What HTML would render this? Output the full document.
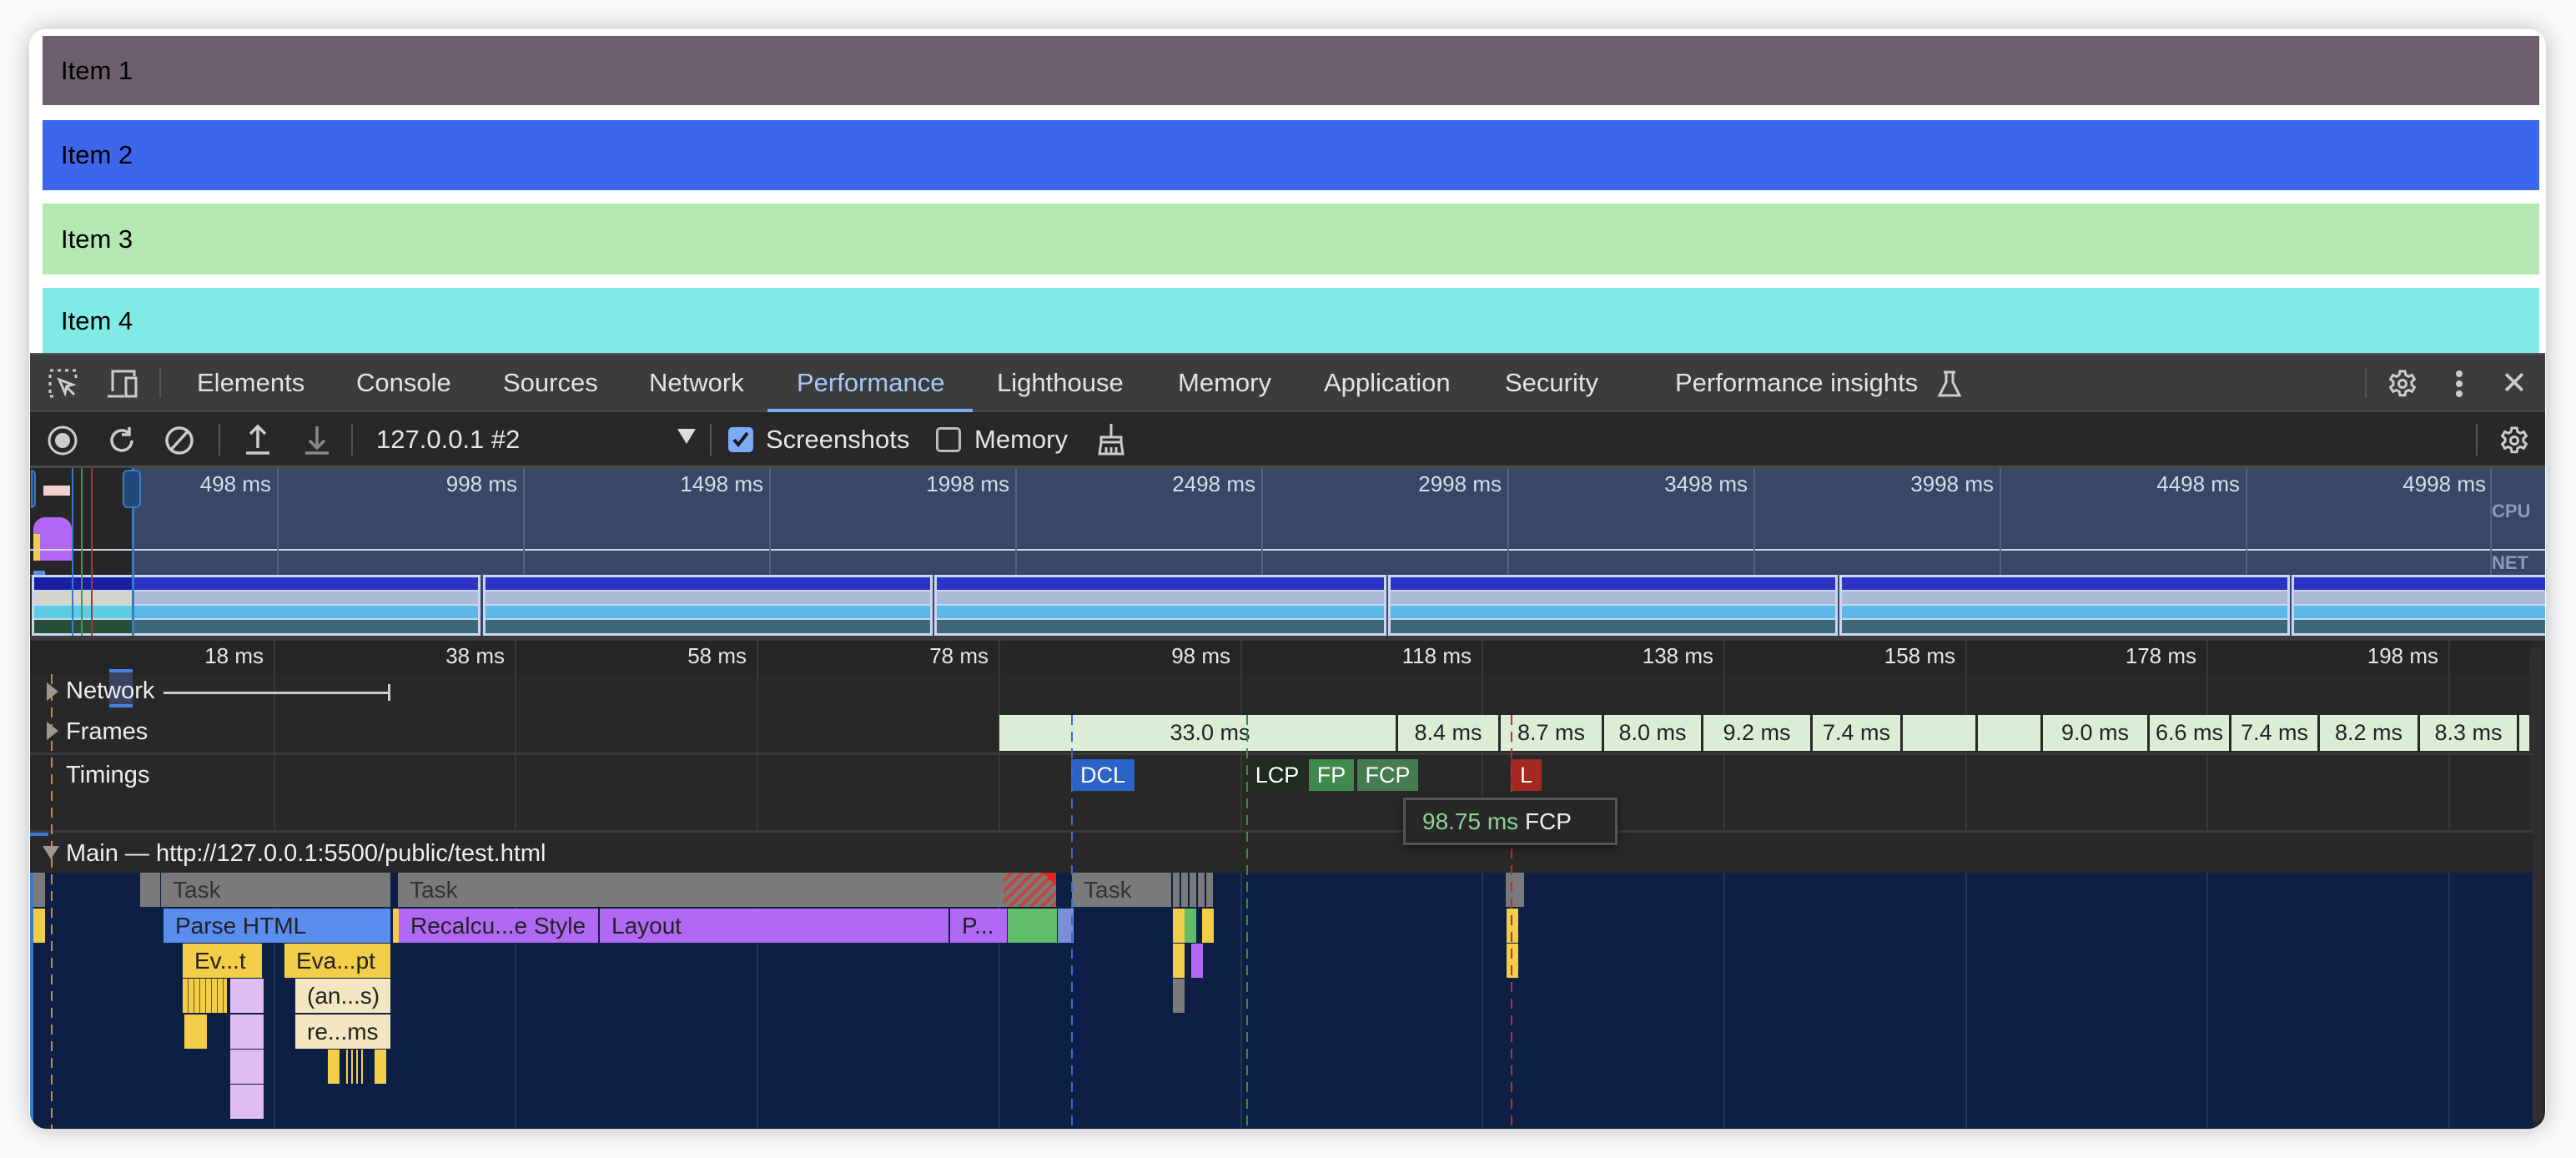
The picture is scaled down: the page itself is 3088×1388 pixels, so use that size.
<!DOCTYPE html>
<html><head><meta charset="utf-8"><style>
*{box-sizing:border-box;margin:0;padding:0}
body{width:3088px;height:1388px;background:#fafafa;position:relative;overflow:hidden;font-family:"Liberation Sans",Arial,sans-serif}
.a{position:absolute}
.win{left:35px;top:35px;width:3017px;height:1318px;background:#fff;border-radius:20px;box-shadow:0 0 30px rgba(0,0,0,.25);overflow:hidden}
.item{position:absolute;left:16px;width:2993px;font-size:31px;color:#000;padding-left:22px;display:flex;align-items:center}
.tab{position:absolute;top:0;height:71px;line-height:71px;font-size:31px;color:#e3e3e3}
.sep{position:absolute;width:2px;background:#555}
.tk{position:absolute;font-size:26px;color:#e6e6e6;text-align:right;width:200px}
.gl{position:absolute;width:2px}
.fr{position:absolute;top:857px;height:43px;background:#dcedd5;border-right:3px solid #282828;font-size:27px;color:#222;text-align:center;line-height:43px;overflow:hidden;white-space:nowrap}
.bar{position:absolute;height:41px;font-size:28px;line-height:41px;color:#222;padding-left:14px;overflow:hidden;white-space:nowrap}
.tm{position:absolute;top:910px;height:38px;font-size:27px;line-height:38px;color:#fff;text-align:center}
.shot{position:absolute;top:689px;height:73px;border:3px solid #c9d6f2;background:#c9d6f2}
.shot div{height:15px;margin-bottom:2px}
.lbl{position:absolute;font-size:29px;color:#eee}
</style></head><body>
<div class="a win">
 <div class="item" style="top:8px;height:83px;background:#6d5f6e">Item 1</div>
 <div class="item" style="top:109px;height:84px;background:#3e66ec">Item 2</div>
 <div class="item" style="top:209px;height:85px;background:#b3e9b0">Item 3</div>
 <div class="item" style="top:310px;height:80px;background:#80eae4">Item 4</div>
</div>

<div class="a" style="left:36px;top:423px;width:3015px;height:930px;background:#282828;border-bottom-left-radius:20px;border-bottom-right-radius:20px;overflow:hidden">
<div style="position:absolute;left:-36px;top:-423px;width:3088px;height:1388px">

<div class="a" style="left:36px;top:423px;width:3015px;height:71px;background:#3c3c3c;border-top:2px solid #555;border-bottom:2px solid #4a4a4a"></div>
<div class="a" style="left:0;top:423px;width:3088px;height:71px">
 <svg class="a" style="left:57px;top:18px" width="38" height="38" viewBox="0 0 38 38" fill="none" stroke="#ccc" stroke-width="3"><path d="M3 3h4M12 3h4M21 3h4M30 3h4M3 8v4M3 17v4M3 26v4M3 34h4M34 8v4"/><path d="M14 14l16 6-7 2-2 8z"/><path d="M22 22l10 10"/></svg>
 <svg class="a" style="left:127px;top:18px" width="40" height="38" viewBox="0 0 40 38" fill="none" stroke="#ccc" stroke-width="3"><path d="M8 28V4h26v6"/><rect x="24" y="12" width="12" height="22"/><path d="M2 34h20"/></svg>
 <div class="sep" style="left:191px;top:18px;height:36px"></div>
 <div class="tab" style="left:236px">Elements</div>
 <div class="tab" style="left:427px">Console</div>
 <div class="tab" style="left:603px">Sources</div>
 <div class="tab" style="left:778px">Network</div>
 <div class="tab" style="left:955px;color:#a8c7fa">Performance</div>
 <div class="a" style="left:920px;top:67px;width:246px;height:4px;background:#7cacf8"></div>
 <div class="tab" style="left:1195px">Lighthouse</div>
 <div class="tab" style="left:1412px">Memory</div>
 <div class="tab" style="left:1587px">Application</div>
 <div class="tab" style="left:1804px">Security</div>
 <div class="tab" style="left:2008px">Performance insights</div>
 <svg class="a" style="left:2322px;top:20px" width="30" height="34" viewBox="0 0 30 34" fill="none" stroke="#ccc" stroke-width="3"><path d="M8 3h14M11 3v12L3 31h24L19 15V3"/></svg>
 <div class="sep" style="left:2835px;top:18px;height:36px"></div>
 <svg class="a" style="left:2862px;top:19px" width="36" height="36" viewBox="0 0 24 24" fill="none" stroke="#ccc" stroke-width="2"><circle cx="12" cy="12" r="3"/><path d="M10 2h4l.6 3 2.2 1.2 2.8-1.2 2 3.4-2.3 2v2.4l2.3 2-2 3.4-2.8-1.2-2.2 1.2-.6 3h-4l-.6-3-2.2-1.2-2.8 1.2-2-3.4 2.3-2v-2.4l-2.3-2 2-3.4 2.8 1.2L9.4 5z"/></svg>
 <div class="a" style="left:2944px;top:21px;width:8px;height:8px;border-radius:4px;background:#ccc;box-shadow:0 12px 0 #ccc,0 24px 0 #ccc"></div>
 <div class="a" style="left:2998px;top:14px;font-size:38px;color:#ccc">✕</div>
</div>

<div class="a" style="left:36px;top:494px;width:3015px;height:67px;background:#282828;border-bottom:3px solid #4a4a4a"></div>
<div class="a" style="left:0;top:494px;width:3088px;height:67px">
 <svg class="a" style="left:56px;top:15px" width="38" height="38" viewBox="0 0 38 38"><circle cx="19" cy="19" r="16" fill="none" stroke="#ccc" stroke-width="3"/><circle cx="19" cy="19" r="9" fill="#ccc"/></svg>
 <svg class="a" style="left:127px;top:15px" width="38" height="38" viewBox="0 0 38 38" fill="none" stroke="#ccc" stroke-width="3.5"><path d="M31 19a12 12 0 1 1-4-9"/><path d="M28 3v9h-9"/></svg>
 <svg class="a" style="left:196px;top:15px" width="38" height="38" viewBox="0 0 38 38" fill="none" stroke="#ccc" stroke-width="3.5"><circle cx="19" cy="19" r="15"/><path d="M29 8L9 30"/></svg>
 <div class="sep" style="left:262px;top:14px;height:38px"></div>
 <svg class="a" style="left:292px;top:13px" width="34" height="40" viewBox="0 0 34 40" fill="none" stroke="#ccc" stroke-width="3.5"><path d="M17 30V4M8 13l9-9 9 9M3 36h28"/></svg>
 <svg class="a" style="left:363px;top:13px" width="34" height="40" viewBox="0 0 34 40" fill="none" stroke="#888" stroke-width="3.5"><path d="M17 4v26M8 21l9 9 9-9M3 36h28"/></svg>
 <div class="sep" style="left:421px;top:14px;height:38px"></div>
 <div class="a" style="left:451px;top:15px;font-size:31px;color:#e6e6e6">127.0.0.1 #2</div>
 <div class="a" style="left:812px;top:20px;width:0;height:0;border-left:11px solid transparent;border-right:11px solid transparent;border-top:18px solid #ddd"></div>
 <div class="sep" style="left:851px;top:14px;height:38px"></div>
 <div class="a" style="left:873px;top:18px;width:30px;height:30px;border-radius:5px;background:#7cacf8"></div>
 <svg class="a" style="left:876px;top:21px" width="24" height="24" viewBox="0 0 24 24" fill="none" stroke="#1b1b1b" stroke-width="4"><path d="M4 12l5 6 11-14"/></svg>
 <div class="a" style="left:918px;top:15px;font-size:31px;color:#e6e6e6">Screenshots</div>
 <div class="a" style="left:1122px;top:18px;width:30px;height:30px;border-radius:5px;border:3px solid #bbb"></div>
 <div class="a" style="left:1168px;top:15px;font-size:31px;color:#e6e6e6">Memory</div>
 <svg class="a" style="left:1314px;top:12px" width="36" height="40" viewBox="0 0 36 40" fill="none" stroke="#ccc" stroke-width="3"><path d="M18 2v16M6 18h24v6H6zM6 24l-2 14h28l-2-14M12 30v8M18 30v8M24 30v8"/></svg>
 <div class="sep" style="left:2968px;top:14px;height:38px"></div>
 <svg class="a" style="left:2996px;top:16px" width="36" height="36" viewBox="0 0 24 24" fill="none" stroke="#ccc" stroke-width="2"><circle cx="12" cy="12" r="3"/><path d="M10 2h4l.6 3 2.2 1.2 2.8-1.2 2 3.4-2.3 2v2.4l2.3 2-2 3.4-2.8-1.2-2.2 1.2-.6 3h-4l-.6-3-2.2-1.2-2.8 1.2-2-3.4 2.3-2v-2.4l-2.3-2 2-3.4 2.8 1.2L9.4 5z"/></svg>
</div>

<div class="a" style="left:36px;top:561px;width:3015px;height:201px;background:#374866"></div>
<div class="a" style="left:36px;top:561px;width:122px;height:201px;background:#262626"></div>
<div class="a" style="left:40px;top:620px;width:46px;height:52px;background:#b168f5;border-radius:14px 14px 0 0"></div>
<div class="a" style="left:40px;top:640px;width:8px;height:32px;background:#f2cd47"></div>
<div class="a" style="left:52px;top:582px;width:32px;height:12px;background:#f2cfd0"></div>
<div class="a" style="left:40px;top:684px;width:14px;height:12px;background:#5b8def"></div>
<div class="a" style="left:36px;top:658px;width:3015px;height:2px;background:#cfd6e6"></div>
<div class="a" style="left:36px;top:689px;width:3015px;height:2px;background:#4a5a7a"></div>
<div class="a" style="left:2987px;top:600px;font-size:22px;font-weight:bold;color:#8c9ab6">CPU</div>
<div class="a" style="left:2987px;top:662px;font-size:22px;font-weight:bold;color:#8c9ab6">NET</div>
<div class="gl" style="left:332px;top:561px;height:201px;background:#52627f"></div>
<div class="gl" style="left:627px;top:561px;height:201px;background:#52627f"></div>
<div class="gl" style="left:922px;top:561px;height:201px;background:#52627f"></div>
<div class="gl" style="left:1217px;top:561px;height:201px;background:#52627f"></div>
<div class="gl" style="left:1512px;top:561px;height:201px;background:#52627f"></div>
<div class="gl" style="left:1807px;top:561px;height:201px;background:#52627f"></div>
<div class="gl" style="left:2102px;top:561px;height:201px;background:#52627f"></div>
<div class="gl" style="left:2397px;top:561px;height:201px;background:#52627f"></div>
<div class="gl" style="left:2692px;top:561px;height:201px;background:#52627f"></div>
<div class="gl" style="left:2985px;top:561px;height:201px;background:#52627f"></div>
<div class="tk" style="left:125px;top:565px;color:#d6dcea">498 ms</div>
<div class="tk" style="left:420px;top:565px;color:#d6dcea">998 ms</div>
<div class="tk" style="left:715px;top:565px;color:#d6dcea">1498 ms</div>
<div class="tk" style="left:1010px;top:565px;color:#d6dcea">1998 ms</div>
<div class="tk" style="left:1305px;top:565px;color:#d6dcea">2498 ms</div>
<div class="tk" style="left:1600px;top:565px;color:#d6dcea">2998 ms</div>
<div class="tk" style="left:1895px;top:565px;color:#d6dcea">3498 ms</div>
<div class="tk" style="left:2190px;top:565px;color:#d6dcea">3998 ms</div>
<div class="tk" style="left:2485px;top:565px;color:#d6dcea">4498 ms</div>
<div class="tk" style="left:2780px;top:565px;color:#d6dcea">4998 ms</div>
<div class="shot" style="left:38px;width:538px"><div style="background:#2b34c4"></div><div style="background:#aab9d6"></div><div style="background:#5cb8e6"></div><div style="background:#3d6878;height:16px"></div></div>
<div class="a" style="left:41px;top:692px;width:117px;height:67px;background:linear-gradient(#1a1fa0 0 15px,transparent 15px 17px,#d4d4c8 17px 32px,transparent 32px 34px,#5ccde0 34px 49px,transparent 49px 51px,#27503a 51px)"></div>
<div class="shot" style="left:579px;width:539px"><div style="background:#2b34c4"></div><div style="background:#aab9d6"></div><div style="background:#5cb8e6"></div><div style="background:#3d6878;height:16px"></div></div>
<div class="shot" style="left:1120px;width:542px"><div style="background:#2b34c4"></div><div style="background:#aab9d6"></div><div style="background:#5cb8e6"></div><div style="background:#3d6878;height:16px"></div></div>
<div class="shot" style="left:1664px;width:539px"><div style="background:#2b34c4"></div><div style="background:#aab9d6"></div><div style="background:#5cb8e6"></div><div style="background:#3d6878;height:16px"></div></div>
<div class="shot" style="left:2205px;width:540px"><div style="background:#2b34c4"></div><div style="background:#aab9d6"></div><div style="background:#5cb8e6"></div><div style="background:#3d6878;height:16px"></div></div>
<div class="shot" style="left:2747px;width:310px"><div style="background:#2b34c4"></div><div style="background:#aab9d6"></div><div style="background:#5cb8e6"></div><div style="background:#3d6878;height:16px"></div></div>
<div class="a" style="left:86px;top:561px;width:2px;height:201px;background:#3a77d0"></div>
<div class="a" style="left:97px;top:561px;width:2px;height:201px;background:#3e9a4e"></div>
<div class="a" style="left:109px;top:561px;width:2px;height:201px;background:#b5332a"></div>
<div class="a" style="left:158px;top:561px;width:3px;height:201px;background:#3a7bc0"></div>
<div class="a" style="left:147px;top:563px;width:22px;height:46px;border-radius:6px;background:#1f4a78;border:2px solid #3a7bc0"></div>
<div class="a" style="left:37px;top:563px;width:6px;height:46px;border-radius:0 6px 6px 0;background:#1f4a78;border:2px solid #3a7bc0"></div>

<div class="a" style="left:36px;top:762px;width:3015px;height:6px;background:#3a3a3a"></div>
<div class="a" style="left:36px;top:768px;width:3000px;height:40px;background:#252525"></div>
<div class="gl" style="left:328px;top:768px;height:278px;background:#383838"></div>
<div class="gl" style="left:617px;top:768px;height:278px;background:#383838"></div>
<div class="gl" style="left:907px;top:768px;height:278px;background:#383838"></div>
<div class="gl" style="left:1197px;top:768px;height:278px;background:#383838"></div>
<div class="gl" style="left:1487px;top:768px;height:278px;background:#383838"></div>
<div class="gl" style="left:1776px;top:768px;height:278px;background:#383838"></div>
<div class="gl" style="left:2066px;top:768px;height:278px;background:#383838"></div>
<div class="gl" style="left:2356px;top:768px;height:278px;background:#383838"></div>
<div class="gl" style="left:2645px;top:768px;height:278px;background:#383838"></div>
<div class="gl" style="left:2935px;top:768px;height:278px;background:#383838"></div>
<div class="tk" style="left:116px;top:771px">18 ms</div>
<div class="tk" style="left:405px;top:771px">38 ms</div>
<div class="tk" style="left:695px;top:771px">58 ms</div>
<div class="tk" style="left:985px;top:771px">78 ms</div>
<div class="tk" style="left:1275px;top:771px">98 ms</div>
<div class="tk" style="left:1564px;top:771px">118 ms</div>
<div class="tk" style="left:1854px;top:771px">138 ms</div>
<div class="tk" style="left:2144px;top:771px">158 ms</div>
<div class="tk" style="left:2433px;top:771px">178 ms</div>
<div class="tk" style="left:2723px;top:771px">198 ms</div>
<div class="a" style="left:3032px;top:775px;width:16px;height:570px;background:#2f2f2f;border-radius:8px"></div>

<div class="a" style="left:56px;top:818px;width:0;height:0;border-top:11px solid transparent;border-bottom:11px solid transparent;border-left:14px solid #999"></div>
<div class="a" style="left:131px;top:802px;width:28px;height:46px;background:#3a4460;border-top:4px solid #4a7fe0;border-bottom:4px solid #4a7fe0"></div>
<div class="lbl" style="left:79px;top:812px">Network</div>
<div class="a" style="left:196px;top:829px;width:270px;height:3px;background:#ccc"></div>
<div class="a" style="left:465px;top:820px;width:3px;height:20px;background:#ccc"></div>
<div class="a" style="left:56px;top:865px;width:0;height:0;border-top:11px solid transparent;border-bottom:11px solid transparent;border-left:14px solid #999"></div>
<div class="lbl" style="left:79px;top:861px">Frames</div>
<div class="a" style="left:36px;top:902px;width:3000px;height:3px;background:#3a3a3a"></div>
<div class="fr" style="left:1198px;width:478px">&nbsp;&nbsp;&nbsp;&nbsp;33.0 ms</div>
<div class="fr" style="left:1676px;width:123px">8.4 ms</div>
<div class="fr" style="left:1799px;width:124px">8.7 ms</div>
<div class="fr" style="left:1923px;width:119px">8.0 ms</div>
<div class="fr" style="left:2042px;width:131px">9.2 ms</div>
<div class="fr" style="left:2173px;width:108px">7.4 ms</div>
<div class="fr" style="left:2281px;width:90px"></div>
<div class="fr" style="left:2371px;width:78px"></div>
<div class="fr" style="left:2449px;width:128px">9.0 ms</div>
<div class="fr" style="left:2577px;width:98px">6.6 ms</div>
<div class="fr" style="left:2675px;width:106px">7.4 ms</div>
<div class="fr" style="left:2781px;width:120px">8.2 ms</div>
<div class="fr" style="left:2901px;width:119px">8.3 ms</div>
<div class="fr" style="left:3020px;width:12px;border-right:none"></div>
<div class="lbl" style="left:79px;top:913px">Timings</div>
<div class="a" style="left:36px;top:995px;width:3000px;height:3px;background:#3a3a3a"></div>
<div class="tm" style="left:1284px;width:76px;background:#2d62c9">DCL</div>
<div class="tm" style="left:1500px;width:62px;background:#1f2d20">LCP</div>
<div class="tm" style="left:1569px;width:54px;background:#3f8a4a">FP</div>
<div class="tm" style="left:1627px;width:73px;background:#467a4f">FCP</div>
<div class="tm" style="left:1811px;width:37px;background:#a3281f">L</div>

<div class="a" style="left:36px;top:998px;width:3000px;height:48px;background:#282828"></div>
<div class="a" style="left:36px;top:998px;width:22px;height:4px;background:#3a77d0"></div>
<div class="a" style="left:51px;top:1014px;width:0;height:0;border-left:10px solid transparent;border-right:10px solid transparent;border-top:16px solid #999"></div>
<div class="lbl" style="left:79px;top:1007px">Main — http://127.0.0.1:5500/public/test.html</div>

<div class="a" style="left:36px;top:1046px;width:3000px;height:310px;background:#0e1f45"></div>
<div class="a" style="left:36px;top:1046px;width:4px;height:310px;background:#3a77d0"></div>
<div class="gl" style="left:328px;top:1046px;height:310px;background:#223459"></div>
<div class="gl" style="left:617px;top:1046px;height:310px;background:#223459"></div>
<div class="gl" style="left:907px;top:1046px;height:310px;background:#223459"></div>
<div class="gl" style="left:1197px;top:1046px;height:310px;background:#223459"></div>
<div class="gl" style="left:1487px;top:1046px;height:310px;background:#223459"></div>
<div class="gl" style="left:1776px;top:1046px;height:310px;background:#223459"></div>
<div class="gl" style="left:2066px;top:1046px;height:310px;background:#223459"></div>
<div class="gl" style="left:2356px;top:1046px;height:310px;background:#223459"></div>
<div class="gl" style="left:2645px;top:1046px;height:310px;background:#223459"></div>
<div class="gl" style="left:2935px;top:1046px;height:310px;background:#223459"></div>
<div class="bar" style="left:40px;top:1046px;width:13px;background:#7a7a7a"></div>
<div class="bar" style="left:168px;top:1046px;width:4px;background:#7a7a7a"></div>
<div class="bar" style="left:174px;top:1046px;width:18px;background:#7a7a7a"></div>
<div class="bar" style="left:193px;top:1046px;width:275px;background:#7a7a7a;color:#333">Task</div>
<div class="bar" style="left:477px;top:1046px;width:726px;background:#7a7a7a;color:#333">Task</div>
<div class="bar" style="left:1203px;top:1046px;width:63px;background:repeating-linear-gradient(135deg,#7a7a7a 0 5px,#c0463c 5px 9px)"></div>
<div class="a" style="left:1250px;top:1046px;width:0;height:0;border-left:16px solid transparent;border-top:16px solid #e8231f"></div>
<div class="bar" style="left:1285px;top:1046px;width:119px;background:#7a7a7a;color:#333">Task</div>
<div class="bar" style="left:1406px;top:1046px;width:50px;background:repeating-linear-gradient(90deg,#7a7a7a 0 8px,#0e1f45 8px 10px)"></div>
<div class="bar" style="left:1805px;top:1046px;width:22px;background:#7a7a7a"></div>
<div class="bar" style="left:40px;top:1089px;width:12px;background:#f2cd47"></div>
<div class="bar" style="left:196px;top:1089px;width:272px;background:#5b8def">Parse HTML</div>
<div class="bar" style="left:471px;top:1089px;width:6px;background:#f2cd47"></div>
<div class="bar" style="left:478px;top:1089px;width:239px;background:#b168f5">Recalcu...e Style</div>
<div class="bar" style="left:719px;top:1089px;width:418px;background:#b168f5">Layout</div>
<div class="bar" style="left:1139px;top:1089px;width:68px;background:#b168f5">P...</div>
<div class="bar" style="left:1208px;top:1089px;width:59px;background:#5fbd6a"></div>
<div class="bar" style="left:1268px;top:1089px;width:19px;background:#7a8fd8"></div>
<div class="bar" style="left:1406px;top:1089px;width:12px;background:#f2cd47"></div>
<div class="bar" style="left:1420px;top:1089px;width:10px;background:#5fbd6a"></div>
<div class="bar" style="left:1441px;top:1089px;width:8px;background:#f2cd47"></div>
<div class="bar" style="left:1806px;top:1089px;width:12px;background:#f2cd47"></div>
<div class="bar" style="left:219px;top:1131px;width:95px;background:#f2cd47">Ev...t</div>
<div class="bar" style="left:341px;top:1131px;width:127px;background:#f2cd47">Eva...pt</div>
<div class="bar" style="left:1406px;top:1131px;width:12px;background:#f2cd47"></div>
<div class="bar" style="left:1428px;top:1131px;width:6px;background:#b168f5"></div>
<div class="bar" style="left:1806px;top:1131px;width:10px;background:#f2cd47"></div>
<div class="bar" style="left:219px;top:1173px;width:53px;background:repeating-linear-gradient(90deg,#f2cd47 0 6px,#6b5d2a 6px 7px)"></div>
<div class="bar" style="left:276px;top:1173px;width:40px;background:#dfbcf3"></div>
<div class="bar" style="left:354px;top:1173px;width:114px;background:#f5e6c3">(an...s)</div>
<div class="bar" style="left:1406px;top:1173px;width:10px;background:#7a7a7a"></div>
<div class="bar" style="left:221px;top:1216px;width:27px;background:#f2cd47"></div>
<div class="bar" style="left:276px;top:1216px;width:40px;background:#dfbcf3"></div>
<div class="bar" style="left:354px;top:1216px;width:114px;background:#f5e6c3">re...ms</div>
<div class="bar" style="left:276px;top:1258px;width:40px;background:#dfbcf3"></div>
<div class="bar" style="left:393px;top:1258px;width:12px;background:#f2cd47"></div>
<div class="bar" style="left:449px;top:1258px;width:7px;background:#f2cd47"></div>
<div class="bar" style="left:415px;top:1258px;width:20px;background:repeating-linear-gradient(90deg,#f2cd47 0 2px,#0e1f45 2px 6px)"></div>
<div class="bar" style="left:276px;top:1300px;width:40px;background:#dfbcf3"></div>

<div class="a" style="left:61px;top:808px;width:2px;height:545px;background:repeating-linear-gradient(#d08a3a 0 12px,transparent 12px 20px)"></div>
<div class="a" style="left:1284px;top:857px;width:2px;height:496px;background:repeating-linear-gradient(#3a6ad0 0 12px,transparent 12px 20px)"></div>
<div class="a" style="left:1494px;top:857px;width:2px;height:496px;background:repeating-linear-gradient(#3e8a4a 0 12px,transparent 12px 20px)"></div>
<div class="a" style="left:1811px;top:857px;width:2px;height:496px;background:repeating-linear-gradient(#b5332a 0 12px,transparent 12px 20px)"></div>

<div class="a" style="left:1682px;top:956px;width:257px;height:57px;background:#272727;border:3px solid #555;box-shadow:0 3px 8px rgba(0,0,0,.5);font-size:28px;line-height:51px;padding-left:20px;color:#eee;white-space:nowrap"><span style="color:#8fd29a">98.75 ms</span> FCP</div>
</div></div>
</body></html>
